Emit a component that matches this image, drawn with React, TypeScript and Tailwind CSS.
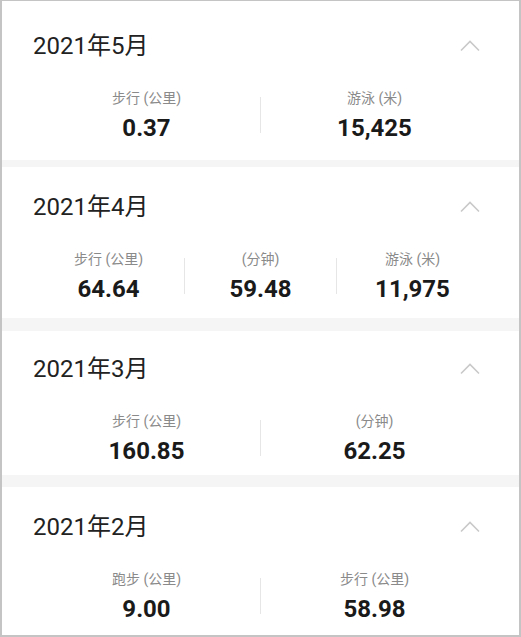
import React from "react";

type Stat = { label: string; value: string };
type Card = { title: string; stats: Stat[]; cls: string };

const cards: Card[] = [
  {
    title: "2021年5月",
    cls: "h-[159px] pt-[30px]",
    stats: [
      { label: "步行 (公里)", value: "0.37" },
      { label: "游泳 (米)", value: "15,425" },
    ],
  },
  {
    title: "2021年4月",
    cls: "h-[151px] pt-[25px]",
    stats: [
      { label: "步行 (公里)", value: "64.64" },
      { label: "(分钟)", value: "59.48" },
      { label: "游泳 (米)", value: "11,975" },
    ],
  },
  {
    title: "2021年3月",
    cls: "h-[144px] pt-[23px]",
    stats: [
      { label: "步行 (公里)", value: "160.85" },
      { label: "(分钟)", value: "62.25" },
    ],
  },
  {
    title: "2021年2月",
    cls: "flex-1 pt-[25px]",
    stats: [
      { label: "跑步 (公里)", value: "9.00" },
      { label: "步行 (公里)", value: "58.98" },
    ],
  },
];

const seps = ["h-[7px]", "h-[13px]", "h-[12px]"];

function Chevron() {
  return (
    <svg width="22" height="12" viewBox="0 0 22 12" className="mr-[7px]">
      <polyline
        points="2,10.5 11,1.5 20,10.5"
        fill="none"
        stroke="#c9c9c9"
        strokeWidth="1.6"
      />
    </svg>
  );
}

function CardView({ card }: { card: Card }) {
  return (
    <div className={`bg-white px-[31px] flex flex-col ${card.cls}`}>
      <div className="flex items-center justify-between h-[30px]">
        <span className="text-[24px] leading-[30px] text-[#222222]">{card.title}</span>
        <Chevron />
      </div>
      <div className="flex mt-[27px] items-center">
        {card.stats.map((s, i) => (
          <React.Fragment key={i}>
            {i > 0 && <div className="w-px h-[36px] bg-[#e6e6e6] self-center" />}
            <div className="flex-1 flex flex-col items-center">
              <span className="text-[14px] leading-[20px] text-[#8a8a8a]">{s.label}</span>
              <span className="mt-[6px] text-[24px] leading-[28px] font-bold text-[#1a1a1a]">
                {s.value}
              </span>
            </div>
          </React.Fragment>
        ))}
      </div>
    </div>
  );
}

export default function App() {
  return (
    <div
      className="w-[521px] h-[637px] flex flex-col border-t border-x-2 border-b-2 border-[#c4c4c4] bg-[#f5f5f5] overflow-hidden"
      style={{ fontFamily: 'Roboto, "Noto Sans CJK SC", sans-serif' }}
    >
      {cards.map((c, i) => (
        <React.Fragment key={i}>
          <CardView card={c} />
          {i < seps.length && <div className={`${seps[i]} bg-[#f5f5f5]`} />}
        </React.Fragment>
      ))}
    </div>
  );
}
